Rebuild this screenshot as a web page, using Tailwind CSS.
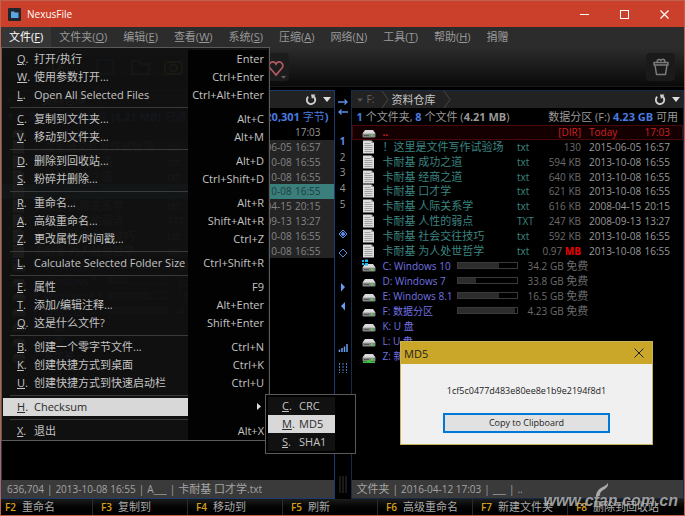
<!DOCTYPE html>
<html lang="zh-CN">
<head>
<meta charset="utf-8">
<title>NexusFile</title>
<script src="https://cdn.jsdelivr.net/npm/@tailwindcss/browser@4"></script>
</head>
<body class="bg-black">
<svg class="hidden">
  <symbol id="doc" viewBox="0 0 12 14"><path d="M.5.5h8.500l2.500 2.500v10.500H.5z" fill="#dcdcdc"/><path d="M9 .5v2.500h2.500z" fill="#888"/><path d="M2 3.500h6M2 5.500h8M2 7.500h8M2 9.500h8M2 11.500h8" stroke="#a2a2a2"/></symbol>
  <symbol id="drive" viewBox="0 0 14 14"><path d="M3 5h8l2.500 3.500H.5z" fill="#dadada"/><rect x=".5" y="8" width="13" height="4.500" rx="1" fill="#858585"/><path d="M1 8.500h12" stroke="#bbb"/><path d="M2 10.500h5" stroke="#555"/><rect x="9" y="9.500" width="2" height="2" fill="#4ddc4d"/></symbol>
  <symbol id="refresh" viewBox="0 0 12 12"><path d="M3.200 2.800A4.200 4.200 0 1 0 8.400 2.400" fill="none" stroke="#d0d0d0" stroke-width="1.900"/><path d="M6 .5h4.500L7 5z" fill="#d0d0d0"/></symbol>
  <symbol id="caret" viewBox="0 0 8 5"><path d="M0 0h8L4 5z" fill="currentColor"/></symbol>
  <symbol id="crumb" viewBox="0 0 8 17"><path d="M1 0l6 8.500L1 17" fill="none" stroke="#454545"/></symbol>
</svg>

<div class="relative flex flex-col min-h-screen border border-[#c0604f] bg-black font-['Open_Sans','Noto_Sans_CJK_SC',sans-serif] text-[11px] leading-[15px] text-[#999] select-none">
  <header class="flex items-center h-[26px] bg-[#cb402a] pl-[7px] text-white">
    <svg class="size-[13px]" viewBox="0 0 13 13" role="img" aria-label="NexusFile"><rect width="13" height="13" rx="1" fill="#20262c"/><path d="M3 3.500h3l1 1h3.500v5.500H3z" fill="#5aa7e2"/></svg>
    <h1 class="ml-[6px] text-[10px]">NexusFile</h1>
    <div class="ml-auto flex">
      <button aria-label="最小化" class="w-10 h-[26px] grid place-items-center"><svg class="size-[9px]" viewBox="0 0 9 9"><path d="M0 4.500h9" stroke="#fff"/></svg></button>
      <button aria-label="最大化" class="w-10 h-[26px] grid place-items-center"><svg class="size-[9px]" viewBox="0 0 9 9"><rect x=".5" y=".5" width="8" height="8" fill="none" stroke="#fff"/></svg></button>
      <button aria-label="关闭" class="w-10 h-[26px] grid place-items-center"><svg class="size-[9px]" viewBox="0 0 9 9"><path d="M.5.500l8 8m0-8l-8 8" stroke="#fff" stroke-width="1.200"/></svg></button>
    </div>
  </header>

  <div class="bg-linear-to-b from-[#2c2c2c] from-35% to-[#0a0a0a] border-b border-[#191919]">
    <nav class="relative z-10 flex h-[20px] leading-5" id="menubar">
    </nav>
    <div class="flex h-[39px] items-center justify-between pl-10 pr-[9px]">
      <div class="flex items-center">
        <svg class="w-[217px] h-7" viewBox="0 0 217 28" fill="none" stroke-width="2"><path d="M12 8l9 6-9 6z" stroke="#b89a30"/><rect x="56" y="7" width="16" height="14" stroke="#3666a0"/><path d="M91 8h7l2 3h8v10H91z" stroke="#a07a30"/><rect x="124" y="9" width="17" height="12" rx="2" stroke="#a8a030"/><circle cx="132.500" cy="15" r="3.500" stroke="#a8a030"/><path d="M162 20V9l8-2v11" stroke="#3666c0"/><rect x="191" y="7" width="17" height="12" stroke="#3666c0"/></svg>
        <button aria-label="收藏" class="w-[31px] h-7 rounded-sm bg-[#1c1c1c]"><svg class="w-[31px] h-7" viewBox="0 0 31 28"><path d="M18 22l-6-7c-3-4 3-9 6-4 3-5 9 0 6 4z" fill="none" stroke="#b05a60" stroke-width="1.800"/><path d="M23 23h5l-2.500 2.500z" fill="#666"/></svg></button>
      </div>
      <button aria-label="回收站" class="w-[29px] h-7 rounded-sm bg-[#1a1a1a]"><svg class="w-[29px] h-7" viewBox="0 0 29 28" fill="none" stroke="#7c7c7c" stroke-width="1.500" stroke-linejoin="round"><path d="M8 9.500h14v2.500H8zM9 12l1.500 9.500h9L21 12M11 9c0-3 3-3 4-1.500C16 5.500 19 5.500 19 9"/></svg></button>
    </div>
  </div>

  <main class="flex flex-1 pt-[3px]">
    <section class="flex flex-col flex-1 min-w-0 border border-[#1c3c6c]" id="leftPanel" aria-label="左面板"></section>
    <div class="flex flex-col items-center w-4 text-[10px] text-[#999]">
      <svg class="mt-2 w-[10px] h-[18px]" viewBox="0 0 10 18" fill="none" stroke="#5b8ee8" stroke-width="1.300"><path d="M0 4h9M6.500 1.500L9 4 6.500 6.500M10 14H1M3.500 11.500L1 14l2.500 2.500"/></svg>
      <div class="mt-[18px] flex flex-col h-[78px] items-center">
        <button class="flex-1 font-bold text-[#5b8ee8]">1</button><button class="flex-1">2</button><button class="flex-1">3</button><button class="flex-1">4</button><button class="flex-1">5</button>
      </div>
      <svg class="mt-[15px] w-[10px] h-[34px]" viewBox="0 0 10 34"><path d="M5 3l4 4-4 4-4-4zM5 22l4 4-4 4-4-4z" fill="none" stroke="#5b8ee8"/><path d="M5 4.500L7.500 7 5 9.500 2.500 7z" fill="#5b8ee8"/></svg>
      <svg class="mt-[19px] w-[10px] h-8" viewBox="0 0 10 32"><path d="M3 3l4 4-4 4.500zM7 22l-4 4 4 4.500z" fill="#6b9cf4"/></svg>
      <svg class="mt-[32px] w-[10px] h-[30px]" viewBox="0 0 10 30"><path d="M1.500 8V5.500M4 8V4M6.500 8V2.500M9 8V0" stroke="#6b9cf4" stroke-width="1.500"/><path d="M1.500 19v10M5 19v10M8.500 19v10" stroke="#4a74c0" stroke-dasharray="2 1"/></svg>
      <svg class="mt-auto mb-[6px] w-[8px] h-[17px]" viewBox="0 0 8 17"><path d="M1 0v17M4 0v17M7 0v17" stroke="#333"/></svg>
    </div>
    <section class="flex flex-col flex-1 min-w-0 border border-[#172a48]" id="rightPanel" aria-label="右面板"></section>
  </main>

  <footer class="flex h-[16px] leading-4 bg-linear-to-b from-[#1c1c1c] to-black" id="fkeys"></footer>

  <div class="absolute right-[6px] bottom-[5px] text-[#b4b4b4]/85">
    <svg class="absolute left-[53px] -top-[9px] w-[14px] h-[13px]" viewBox="0 0 14 13" aria-hidden="true"><path d="M0 13C1 4 8 5 12 0c1 7-7 5-9 13z" fill="#aaa"/></svg>
    <span class="font-['Liberation_Sans',sans-serif] font-bold italic text-[16px] leading-[18px]">www.cfan.com.cn</span>
  </div>

  <div role="dialog" aria-labelledby="dlgTitle" class="absolute left-[399px] top-[340px] w-[253px] h-[104px] border border-[#c9b35a] bg-[#f0f0f0] text-[#222] flex flex-col items-center">
    <div class="flex items-center justify-between w-full h-[22px] shrink-0 bg-[#caa728] pl-[3px] pr-[8px]">
      <h2 id="dlgTitle" class="text-[11px]">MD5</h2>
      <button aria-label="关闭对话框"><svg class="size-[10px]" viewBox="0 0 10 10"><path d="M.5.500l9 9m0-9l-9 9" stroke="#222"/></svg></button>
    </div>
    <p class="mt-[21px] text-[9px] leading-3">1cf5c0477d483e80ee8e1b9e2194f8d1</p>
    <button class="mt-[16px] w-[167px] h-[20px] border-2 border-[#0078d7] bg-[#e1e1e1] text-[9px] leading-4">Copy to Clipboard</button>
  </div>
</div>

<script>
const files = [
  ['！这里是文件写作试验场', 'txt', '130', '2015-06-05', '16:57'],
  ['卡耐基 成功之道', 'txt', '594 KB', '2013-10-08', '16:55'],
  ['卡耐基 经商之道', 'txt', '640 KB', '2013-10-08', '16:55'],
  ['卡耐基 口才学', 'txt', '621 KB', '2013-10-08', '16:55'],
  ['卡耐基 人际关系学', 'txt', '616 KB', '2008-04-15', '20:15'],
  ['卡耐基 人性的弱点', 'TXT', '247 KB', '2008-09-13', '13:27'],
  ['卡耐基 社会交往技巧', 'txt', '592 KB', '2013-10-08', '16:55'],
  ['卡耐基 为人处世哲学', 'txt', '0.97 <b class="text-[#f00000]">MB</b>', '2013-10-08', '16:55'],
];
const drives = [
  ['C: Windows 10', 70, '34.2 GB'], ['D: Windows 7', 31, '33.8 GB'], ['E: Windows 8.1', 70, '16.5 GB'],
  ['F: 数据分区', 98, '4.23 GB'], ['K: U 盘'], ['L: U 盘'], ['Z: 新加卷'],
];
const bar = '<span class="px-[3px]">|</span>';
function panel(left) {
  const rows = files.map((f, i) => {
    const sel = left && i === 3;
    const row = sel ? 'bg-[#3a7f7c] text-[#1c3c3c]' : left ? 'bg-[#242424] text-[#858585]' : '';
    const name = left ? '' : 'text-[#3b8580]';
    const size = left ? '' : 'text-[#6c6c6c]';
    return `<tr class="${row}"><td class="pl-[10px]"><svg class="w-[13px] h-[14px]"><use href="#doc"/></svg></td>
      <td class="text-[11px] ${name}">${f[0]}</td><td class="${name}">${f[1]}</td>
      <td class="text-right pr-2 ${size}">${f[2]}</td><td>${f[3]}</td><td class="text-right pr-[13px]">${f[4]}</td></tr>`;
  }).join('');
  const top = left ? 'text-[#999]' : 'bg-[#140000] text-[#d02020] outline outline-[#4a0808] -outline-offset-1';
  const disks = drives.map((d, i) => `<tr><td class="pl-[10px]"><svg class="w-[14px] h-[14px]" viewBox="0 0 14 14"><use href="#drive"/>
      ${i === 0 ? '<path d="M0 1h2v2H0zM3 .5h3V3H3zM0 4h2v2H0zM3 4h3v2.500H3z" fill="#20b8f0"/>' : ''}
      ${i === 6 ? '<path d="M1 14v-1.500h4V11h4v1.500h4V14z" fill="#40c040"/>' : ''}</svg></td>
      <td class="text-[#7272e0]">${d[0]}</td>
      <td>${d[2] ? `<div role="meter" aria-label="${d[0]}" class="w-[61px] h-[7px] border border-[#3a3a3a]"><div class="h-full bg-[#2c2c2c]" style="width:${d[1]}%"></div></div>` : ''}</td>
      <td class="text-[#6c6c6c]">${d[2] ? d[2] + ' <span class="text-[11px]">免费</span>' : ''}</td></tr>`).join('');
  return `
  <div class="flex items-center h-[17px] bg-[#222] pl-[5px] pr-[3px]">
    <svg class="w-[6px] h-1 text-[#555]" viewBox="0 0 8 5"><use href="#caret"/></svg>
    <span class="ml-1 w-[14px] text-[10px] text-[#666]">F:</span><svg class="w-2 h-[17px]"><use href="#crumb"/></svg>
    <span class="mx-[3px] text-[#c4c4c4]">资料仓库</span><svg class="ml-1 w-2 h-[17px]"><use href="#crumb"/></svg>
    <button class="ml-auto mr-[6px]" aria-label="刷新"><svg class="size-[12px]"><use href="#refresh"/></svg></button>
    <button aria-label="历史" class="text-[#ddd]"><svg class="w-2 h-[5px]" viewBox="0 0 8 5"><use href="#caret"/></svg></button>
  </div>
  <div class="flex justify-between h-[17px] leading-[17px] pl-[5px] pr-[5px] whitespace-nowrap ${left ? 'text-[#4a7be0]' : ''}">
  ${left ? '<span><b>1</b> 个文件夹, <b>8</b> 个文件 <b>(4.21 MB)</b></span><span>已选择 <b>8</b> 个项目 <b>(4,420,301</b> 字节<b>)</b></span>'
    : '<span><b class="text-[#4a7be0]">1</b> 个文件夹, <b class="text-[#4a7be0]">8</b> 个文件 (<b>4.21 MB</b>)</span><span>数据分区 (F:) <b class="text-[#4a7be0]">4.23 GB</b> 可用</span>'}
  </div>
  <table class="w-full table-fixed h-[133px] text-[10px] leading-[14px] whitespace-nowrap [&_td]:overflow-hidden [&_svg]:block">
    <colgroup><col class="w-[31px]"><col><col class="w-[22px]"><col class="w-[50px]"><col class="w-[54px]"><col class="w-[40px]"></colgroup>
    <tr class="${top}"><td class="pl-[10px]"><svg class="size-[14px]"><use href="#drive"/></svg></td><td><b>..</b></td><td></td><td class="text-right pr-2">${left ? '' : '[DIR]'}</td><td>${left ? '' : 'Today'}</td><td class="text-right pr-[13px]">17:03</td></tr>
    ${rows}
  </table>
  <table class="w-full table-fixed h-[105px] text-[10px] leading-[14px] whitespace-nowrap [&_svg]:block">
    <colgroup><col class="w-[31px]"><col class="w-[74px]"><col class="w-[71px]"><col></colgroup>${disks}
  </table>
  <div class="mt-auto h-[18px] leading-[18px] bg-[#3a3a3a] pl-[5px] text-[10px] text-[#a4a4a4]">${left
    ? `636,704${bar}2013-10-08 16:55${bar}A___${bar}<span class="text-[11px]">卡耐基 口才学</span>.txt`
    : `<span class="text-[11px]">文件夹</span>${bar}2016-04-12 17:03${bar}___${bar}..`}</div>`;
}
document.getElementById('leftPanel').innerHTML = panel(true);
document.getElementById('rightPanel').innerHTML = panel(false);

document.getElementById('fkeys').innerHTML = ['重命名', '复制到', '移动到', '刷新', '高级重命名', '新建文件夹', '删除到回收站'].map((t, i) =>
  `<button class="flex items-center shrink-0 gap-[6px] whitespace-nowrap ${i ? 'w-[95px] pl-2 border-l border-[#2a2a2a]' : 'w-[91px] pl-1'}"><b class="text-[10px] font-semibold text-[#d8a018]">F${i + 2}</b><span class="text-[#aaa]">${t}</span></button>`).join('');

const items = [['Q', '打开/执行', 'Enter'], ['W', '使用参数打开...', 'Ctrl+Enter'], ['L', 'Open All Selected Files', 'Ctrl+Alt+Enter'], 0,
  ['C', '复制到文件夹...', 'Alt+C'], ['V', '移动到文件夹...', 'Alt+M'], 0,
  ['D', '删除到回收站...', 'Alt+D'], ['S', '粉碎并删除...', 'Ctrl+Shift+D'], 0,
  ['R', '重命名...', 'Alt+R'], ['A', '高级重命名...', 'Shift+Alt+R'], ['Z', '更改属性/时间戳...', 'Ctrl+Z'], 0,
  ['L', 'Calculate Selected Folder Size', 'Ctrl+Shift+R'], 0,
  ['E', '属性', 'F9'], ['T', '添加/编辑注释...', 'Alt+Enter'], ['Q', '这是什么文件?', 'Shift+Enter'], 0,
  ['B', '创建一个零字节文件...', 'Ctrl+N'], ['K', '创建快捷方式到桌面', 'Ctrl+K'], ['U', '创建快捷方式到快速启动栏', 'Ctrl+U'], 0,
  ['H', 'Checksum', ''], 0, ['X', '退出', 'Alt+X']];
const menu = items.map(m => m === 0
  ? '<div role="separator" class="flex h-[6px] items-center"><div class="ml-[7px] w-[178px] h-px bg-[#3a3a3a]"></div></div>'
  : `<button role="menuitem" class="flex w-full h-[18px] leading-[18px] text-left"><span class="flex w-[185px] h-[18px] pl-[14px] ${m[1] === 'Checksum' ? 'bg-[#d8d8d8] text-[#2a2a2a]' : ''}"><span class="w-[17px]"><u>${m[0]}</u>.</span>${m[1]}</span><span class="flex-1 text-right pr-1">${m[2] || '<svg class="inline-block w-[4px] h-[7px] mr-[3px] mb-1" viewBox="0 0 4 7"><path d="M0 0l4 3.500L0 7z" fill="#ddd"/></svg>'}</span></button>`).join('');
const sub = [['C', 'CRC'], ['M', 'MD5'], ['S', 'SHA1']].map((m, i) =>
  `<button role="menuitem" class="flex w-[67px] h-[18px] leading-[18px] pl-[14px] text-left ${i === 1 ? 'bg-[#d8d8d8] text-[#2a2a2a]' : ''}"><span class="w-[17px]"><u>${m[0]}</u>.</span>${m[1]}</button>`).join('');
document.getElementById('menubar').innerHTML = [['文件', 'F'], ['文件夹', 'O'], ['编辑', 'E'], ['查看', 'W'], ['系统', 'S'], ['压缩', 'A'], ['网络', 'N'], ['工具', 'T'], ['帮助', 'H'], ['捐赠', '']].map((t, i) =>
  `<button class="px-2 whitespace-nowrap ${i ? '' : 'bg-[#363636] text-white'}">${t[0]}${t[1] ? `(<u>${t[1]}</u>)` : ''}</button>`).join('') +
  `<div role="menu" class="absolute left-0 top-full w-[269px] border border-[#5a5a5a] pt-[2px] pl-px pr-px text-[#c4c4c4] whitespace-nowrap bg-[#111]/95"><div class="bg-linear-to-r from-transparent from-[185px] to-black/90 to-[185px]">${menu}</div></div>
   <div role="menu" class="absolute left-[264px] top-[367px] w-[91px] border border-[#5a5a5a] bg-black p-[2px] text-[#c4c4c4]"><div class="w-[67px] bg-[#111]">${sub}</div></div>`;
</script>
</body>
</html>
